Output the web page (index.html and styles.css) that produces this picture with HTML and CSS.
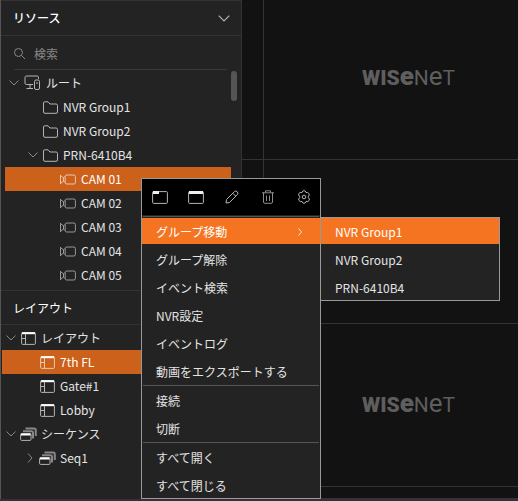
FILE: index.html
```html
<!DOCTYPE html>
<html lang="ja">
<head>
<meta charset="utf-8">
<title>Wisenet</title>
<link rel="stylesheet" href="styles.css">
</head>
<body>
<svg class="defs" aria-hidden="true">
  <symbol id="down" viewBox="0 0 10 6"><path d="M.5 .5 5 5 9.500 .5"/></symbol>
  <symbol id="right" viewBox="0 0 6 10"><path d="M1 .5 5 5 1 9.500"/></symbol>
  <symbol id="search" viewBox="0 0 12 12"><circle cx="4.500" cy="4.500" r="4"/><path d="M7.500 7.500 11 11"/></symbol>
  <symbol id="devices" viewBox="0 0 17 16"><path d="M9 9.500H2.500Q1 9.500 1 8V2.500Q1 1 2.500 1H13Q14.500 1 14.500 2.500V4M6 10v3M2.500 13.500H9"/><rect x="10.500" y="5" width="5" height="9.500" rx="1.500"/><path d="M13 7v2"/></symbol>
  <symbol id="folder" viewBox="0 0 15 13"><path d="M.5 11V2Q.5 .8 1.700 .8H5L7 3H13Q14.500 3 14.500 4.500V11Q14.500 12.300 13 12.300H2Q.5 12.300 .5 11Z"/></symbol>
  <symbol id="camera" viewBox="0 0 16 11"><rect x="5.200" y="1" width="10.200" height="9" rx="1.500"/><path d="M.5 1v9M.5 1.500 3.500 4V7L.5 9.500M3.500 4 4.500 2.500M3.500 7 4.500 8.500"/></symbol>
  <symbol id="layout" viewBox="0 0 15 13"><rect x=".6" y=".6" width="13.800" height="11.800" rx="1"/><path class="thick" d="M1 1.200H14"/><path d="M4.500 2v10M.5 6.500H4.500"/></symbol>
  <symbol id="sequence" viewBox="0 0 17 14"><path class="dim" d="M5.500 1.500H14.500Q15.800 1.500 15.800 3V9M3 4.200H11.500Q13 4.200 13 5.500V11.500"/><rect x=".6" y="6.600" width="10.400" height="6.800" rx="1"/><path class="thick" d="M1 7.500H10.500"/></symbol>
  <symbol id="tab" viewBox="0 0 16 13"><rect x=".6" y=".6" width="14.800" height="11.800" rx="1"/><path class="fill" d="M1 0H7V3H1Z"/></symbol>
  <symbol id="window" viewBox="0 0 16 13"><rect x=".6" y=".6" width="14.800" height="11.800" rx="1"/><path class="fill" d="M1 0H15V3H1Z"/></symbol>
  <symbol id="pencil" viewBox="0 0 14 14"><path d="M1 13 1.500 9.500 9.500 1.500Q10.800 .3 12.200 1.700T12.500 4.500L4.500 12.500ZM8 3.500 10.500 6"/></symbol>
  <symbol id="trash" viewBox="0 0 12 14"><path d="M0 2.800H12M3.500 2.500V.8H8.500V2.500M1.500 2.500V12Q1.500 13.300 3 13.300H9Q10.500 13.300 10.500 12V2.500M4.500 5.500v5.500M7.500 5.500v5.500"/></symbol>
  <symbol id="gear" viewBox="0 0 14 14"><path d="M5 2.600Q5.300 .7 7 .7T9 2.600Q10.800 1.800 11.900 3.500T11.400 6.200V7.800Q13.200 8.800 12.100 10.500T9 11.400Q8.700 13.300 7 13.300T5 11.400Q3.200 12.200 2 10.500T2.600 7.800V6.200Q.9 5.200 1.900 3.500T5 2.600Z"/><circle cx="7" cy="7" r="1.800"/></symbol>
</svg>

<div class="app">
  <aside class="sidebar">
    <section class="panel">
      <h2 class="panel-title strong">リソース<button class="collapse" aria-label="折りたたむ"><svg width="12" height="7"><use href="#down"/></svg></button></h2>
      <label class="search">
        <svg width="12" height="12"><use href="#search"/></svg>
        <input type="text" placeholder="検索" aria-label="検索">
      </label>
      <div class="tree-area">
        <ul class="tree">
          <li><button class="node root"><svg class="chevron" width="10" height="6"><use href="#down"/></svg><svg width="17" height="16"><use href="#devices"/></svg>ルート</button></li>
          <li><button class="node level-1"><svg width="15" height="13"><use href="#folder"/></svg>NVR Group1</button></li>
          <li><button class="node level-1"><svg width="15" height="13"><use href="#folder"/></svg>NVR Group2</button></li>
          <li><button class="node level-1 open"><svg class="chevron" width="10" height="6"><use href="#down"/></svg><svg width="15" height="13"><use href="#folder"/></svg>PRN-6410B4</button></li>
          <li><button class="node level-2 selected"><svg width="16" height="11"><use href="#camera"/></svg>CAM 01</button></li>
          <li><button class="node level-2"><svg width="16" height="11"><use href="#camera"/></svg>CAM 02</button></li>
          <li><button class="node level-2"><svg width="16" height="11"><use href="#camera"/></svg>CAM 03</button></li>
          <li><button class="node level-2"><svg width="16" height="11"><use href="#camera"/></svg>CAM 04</button></li>
          <li><button class="node level-2"><svg width="16" height="11"><use href="#camera"/></svg>CAM 05</button></li>
        </ul>
        <div class="scrollbar"></div>
      </div>
    </section>
    <section class="panel">
      <h2 class="panel-title small">レイアウト</h2>
      <ul class="tree layouts">
        <li><button class="node root"><svg class="chevron" width="10" height="6"><use href="#down"/></svg><svg width="15" height="13"><use href="#layout"/></svg>レイアウト</button></li>
        <li><button class="node level-1 selected"><svg width="15" height="13"><use href="#layout"/></svg>7th FL</button></li>
        <li><button class="node level-1"><svg width="15" height="13"><use href="#layout"/></svg>Gate#1</button></li>
        <li><button class="node level-1"><svg width="15" height="13"><use href="#layout"/></svg>Lobby</button></li>
        <li><button class="node root sequence"><svg class="chevron" width="10" height="6"><use href="#down"/></svg><svg width="17" height="14"><use href="#sequence"/></svg>シーケンス</button></li>
        <li><button class="node level-1 open sequence"><svg class="chevron" width="10" height="10"><use href="#right"/></svg><svg width="17" height="14"><use href="#sequence"/></svg>Seq1</button></li>
      </ul>
    </section>
  </aside>

  <main class="viewer">
    <div class="tile"></div>
    <div class="tile"><span class="logo"><b>WIS<i>e</i></b>N<i>e</i>T</span></div>
    <div class="tile"></div>
    <div class="tile"></div>
    <div class="tile"></div>
    <div class="tile"><span class="logo"><b>WIS<i>e</i></b>N<i>e</i>T</span></div>
    <div class="tile"></div>
    <div class="tile"></div>
  </main>
</div>

<div class="menu">
  <div class="tools">
    <button aria-label="タブで開く"><svg width="16" height="13"><use href="#tab"/></svg></button>
    <button aria-label="ウィンドウで開く"><svg width="16" height="13"><use href="#window"/></svg></button>
    <button aria-label="編集"><svg width="14" height="14"><use href="#pencil"/></svg></button>
    <button aria-label="削除"><svg class="muted" width="12" height="14"><use href="#trash"/></svg></button>
    <button aria-label="設定"><svg width="14" height="14"><use href="#gear"/></svg></button>
  </div>
  <hr>
  <div class="group">
    <button class="item active">グループ移動<svg width="6" height="8"><use href="#right"/></svg></button>
    <button class="item">グループ解除</button>
    <button class="item">イベント検索</button>
    <button class="item">NVR設定</button>
    <button class="item">イベントログ</button>
    <button class="item">動画をエクスポートする</button>
  </div>
  <hr>
  <div class="group">
    <button class="item">接続</button>
    <button class="item">切断</button>
  </div>
  <hr>
  <div class="group">
    <button class="item">すべて開く</button>
    <button class="item">すべて閉じる</button>
  </div>
  <div class="submenu group">
    <button class="item active">NVR Group1</button>
    <button class="item">NVR Group2</button>
    <button class="item">PRN-6410B4</button>
  </div>
</div>
</body>
</html>
```
FILE: styles.css
```css
* { box-sizing: border-box; }

body {
  margin: 0;
  background: #121212;
  color: #e4e4e4;
  font: 12px/20px "Noto Sans CJK JP", sans-serif;
  overflow: hidden;
}

button, input { font: inherit; color: inherit; background: none; border: 0; padding: 0; }
ul { list-style: none; margin: 0; padding: 0; }
svg { fill: none; stroke: #b4b4b4; flex: none; }
.defs { position: absolute; width: 0; height: 0; }
.thick { stroke: #fff; stroke-width: 2; }
.dim { stroke: #888; stroke-width: 2; }
.fill { fill: #eee; stroke: none; }
.muted { stroke: #8c8c8c; }

.app { display: flex; min-height: 100vh; border-bottom: 2px solid #333; }

.sidebar {
  width: 242px;
  flex: none;
  background: #232323;
  border-left: 1px solid #555;
  border-right: 1px solid #333;
}
.panel { border-top: 1px solid #333; }
.panel-title {
  display: flex;
  align-items: center;
  justify-content: space-between;
  height: 35px;
  margin: 0;
  padding: 0 11px 0 12px;
  border-bottom: 1px solid #333;
  color: #fff;
  font-size: 12px;
  font-weight: 400;
}
.panel-title.small { height: 34px; }
.panel-title.strong { font-weight: 500; }
.collapse { display: flex; }

.search {
  display: flex;
  align-items: center;
  gap: 8px;
  height: 34px;
  margin: 0 14px 1px 13px;
  padding-top: 2px;
  border-bottom: 1px solid #383838;
}
.search svg { stroke: #888; }
.search input { flex: 1; min-width: 0; height: 24px; }
.search input::placeholder { color: #888; opacity: 1; }

.tree-area { display: flex; padding-bottom: 3px; }
.tree-area .tree { flex: 1; padding-left: 4px; }
.scrollbar { width: 6px; height: 30px; margin-right: 4px; border-radius: 3px; background: #555; }
.layouts { padding: 1px 0 0 1px; }

.node {
  display: flex;
  align-items: center;
  gap: 5px;
  width: 100%;
  height: 24px;
  white-space: nowrap;
}
.root { padding-left: 4px; }
.layouts .root { padding-left: 4px; }
.level-1 { padding-left: 38px; }
.level-1.open { padding-left: 23px; }
.level-2 { padding-left: 55px; }
.level-2:not(.selected) svg { stroke: #999; }
.layouts .sequence { gap: 4px; }
.node .chevron { stroke: #888; }
.selected { background: #cc611c; color: #fff; }
.selected svg { stroke: #eec7ad; }

.viewer {
  flex: 1;
  min-width: 0;
  overflow: hidden;
  display: grid;
  grid-template-columns: 22px 290px;
  grid-template-rows: 164px 164px 163px 1fr;
  margin-top: -4px;
}
.tile {
  display: flex;
  align-items: center;
  justify-content: center;
  border-right: 1px solid #333;
  border-bottom: 1px solid #333;
}
.logo { color: #5e5e5e; font: 21px/30px Roboto, sans-serif; }
.logo b { font-weight: 900; }
.logo i { font-style: normal; font-size: 26px; line-height: 20px; }

.menu {
  position: absolute;
  left: 141px;
  top: 178px;
  width: 180px;
  border: 1px solid #999;
  background: #232323;
}
.menu hr { height: 1px; margin: 1px; border: 0; background: #555; }
.tools {
  display: flex;
  align-items: center;
  justify-content: space-between;
  height: 36px;
  padding: 0 8px 0 10px;
  background: #000;
}
.tools button { display: flex; justify-content: center; width: 16px; }
.group { display: flex; flex-direction: column; gap: 2px; }
.item {
  display: flex;
  align-items: center;
  justify-content: space-between;
  height: 26px;
  padding: 1px 17px 0 14px;
  text-align: left;
  white-space: nowrap;
}
.active { background: #f57421; color: #fff; }
.active svg { stroke: #fff; }
.submenu {
  position: absolute;
  left: 178px;
  top: 38px;
  width: 180px;
  border: 1px solid #999;
  background: #232323;
}
```
